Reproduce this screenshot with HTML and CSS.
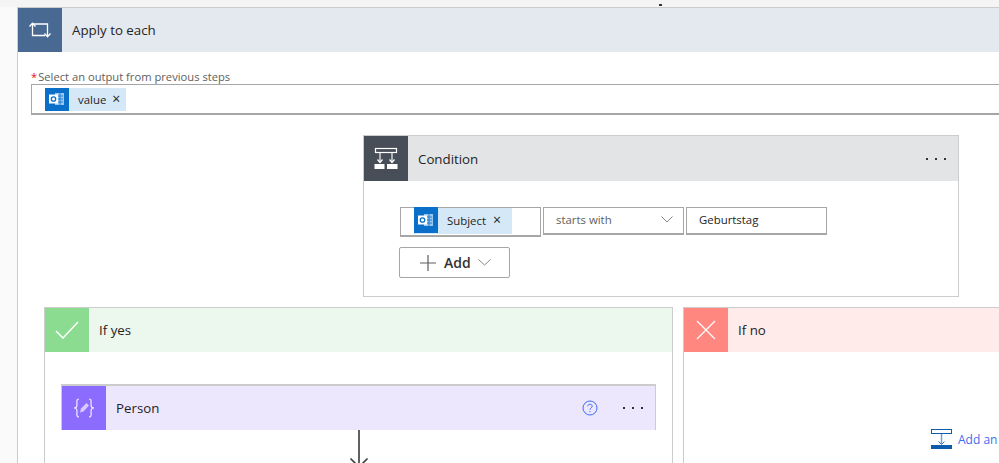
FILE: index.html
```html
<!DOCTYPE html>
<html lang="en">

<head>
    <meta charset="UTF-8">
    <meta name="viewport" content="width=device-width, initial-scale=1.0">
    <title>Apply to each</title>
    <link rel="stylesheet" href="styles.css">
</head>

<body>
    <div class="page">
        <div class="top-tick"></div>
        <div class="card loop">
            <div class="card-head loop-head">
                <div class="head-icon loop-icon">
                    <svg width="24" height="20" viewBox="0 0 24 20" fill="none" stroke="#fff" stroke-width="1.3">
                        <path d="M4.5 3V15.5H17" />
                        <path d="M4.5 4H19.5V16" />
                        <path d="M1.5 6.5L4.5 3.2L7.5 6.5M16.5 13.5L19.5 16.8L22.5 13.5" />
                    </svg>
                </div>
                <span class="head-title">Apply to each</span>
            </div>
            <div class="loop-body">
                <label class="field-label"><span class="req">*</span>Select an output from previous steps</label>
                <div class="output-input">
                    <span class="token">
                        <span class="token-icon">
                            <svg width="18" height="16" viewBox="0 0 18 16">
                                <path d="M7 2H16V14H7Z" fill="#9cc8ee" />
                                <path d="M9 5H15M9 8H15M9 11H15M12 2V14" stroke="#0a6fc9" stroke-width="0.8" />
                                <rect x="1" y="3.5" width="9" height="9" fill="#fff" />
                                <circle cx="5.5" cy="8" r="2.2" fill="none" stroke="#0a6fc9" stroke-width="1.3" />
                            </svg>
                        </span>
                        <span class="token-text">value</span>
                        <span class="token-x">×</span>
                    </span>
                </div>

                <div class="card condition">
                    <div class="card-head cond-head">
                        <div class="head-icon cond-icon">
                            <svg width="24" height="24" viewBox="0 0 24 24" fill="none" stroke="#fff" stroke-width="1.2">
                                <rect x="1.5" y="1.5" width="21" height="4" />
                                <path d="M6 6V15M18 6V15" stroke="#c9ccd0" stroke-width="1.6" />
                                <path d="M3.5 12.5L6 15.5L8.5 12.5M15.5 12.5L18 15.5L20.5 12.5" />
                                <path d="M0.5 17H10.5V22H0.5ZM13 17H23.5V22H13Z" fill="#fff" stroke="none" />
                            </svg>
                        </div>
                        <span class="head-title">Condition</span>
                        <span class="dots">
                            <i></i><i></i><i></i>
                        </span>
                    </div>
                    <div class="cond-body">
                        <div class="cond-row">
                            <div class="cond-field token-field">
                                <span class="token token-tall">
                                    <span class="token-icon">
                                        <svg width="18" height="16" viewBox="0 0 18 16">
                                            <path d="M7 2H16V14H7Z" fill="#9cc8ee" />
                                            <path d="M9 5H15M9 8H15M9 11H15M12 2V14" stroke="#0a6fc9" stroke-width="0.8" />
                                            <rect x="1" y="3.5" width="9" height="9" fill="#fff" />
                                            <circle cx="5.5" cy="8" r="2.2" fill="none" stroke="#0a6fc9" stroke-width="1.3" />
                                        </svg>
                                    </span>
                                    <span class="token-text">Subject</span>
                                    <span class="token-x">×</span>
                                </span>
                            </div>
                            <div class="cond-field cond-select">
                                <span>starts with</span>
                                <svg width="12" height="7" viewBox="0 0 12 7" fill="none" stroke="#8a8886" stroke-width="1">
                                    <path d="M0.5 0.5L6 6L11.5 0.5" />
                                </svg>
                            </div>
                            <div class="cond-field cond-value">Geburtstag</div>
                        </div>
                        <div class="add-btn">
                            <svg width="16" height="16" viewBox="0 0 16 16" fill="none" stroke="#605e5c" stroke-width="1.2">
                                <path d="M8 0V16M0 8H16" />
                            </svg>
                            <span>Add</span>
                            <svg class="add-chevron" width="13" height="7" viewBox="0 0 13 7" fill="none" stroke="#8a8886" stroke-width="1">
                                <path d="M0.5 0.5L6.5 6L12.5 0.5" />
                            </svg>
                        </div>
                    </div>
                </div>

                <div class="branches">
                    <div class="card branch">
                        <div class="card-head yes-head">
                            <div class="head-icon yes-icon">
                                <svg width="24" height="18" viewBox="0 0 24 18" fill="none" stroke="#fff" stroke-width="1.5">
                                    <path d="M1 10L8 17L23 1" />
                                </svg>
                            </div>
                            <span class="head-title">If yes</span>
                        </div>
                        <div class="yes-body">
                            <div class="card person">
                                <div class="card-head person-head">
                                    <div class="head-icon person-icon">
                                        <svg width="24" height="20" viewBox="0 0 24 20" fill="none" stroke="#f0ecff" stroke-width="1.2">
                                            <path d="M7 1C4 1 5 4 5 7C5 9 3.5 10 2 10C3.5 10 5 11 5 13C5 16 4 19 7 19" />
                                            <path d="M17 1C20 1 19 4 19 7C19 9 20.5 10 22 10C20.5 10 19 11 19 13C19 16 20 19 17 19" />
                                            <path d="M8 14.5L9 10.5L14.5 5L17 7.5L11.5 13.5Z" fill="#d6caff" stroke="none" />
                                        </svg>
                                    </div>
                                    <span class="head-title">Person</span>
                                    <svg class="help" width="16" height="16" viewBox="0 0 16 16" fill="none" stroke="#3f6cf0" stroke-width="1">
                                        <circle cx="8" cy="8" r="7" />
                                        <path d="M5.8 6.2C5.8 3.6 10.2 3.6 10.2 6.2C10.2 7.8 8 7.8 8 9.8" />
                                        <path d="M8 11V12.2" />
                                    </svg>
                                    <span class="dots">
                                        <i></i><i></i><i></i>
                                    </span>
                                </div>
                            </div>
                            <svg class="flow-arrow" width="20" height="33" viewBox="0 0 20 33" fill="none" stroke="#3a3a3a" stroke-width="1.6">
                                <path d="M10 0V33M1.5 28.5L10 37L18.5 28.5" />
                            </svg>
                        </div>
                    </div>

                    <div class="card branch">
                        <div class="card-head no-head">
                            <div class="head-icon no-icon">
                                <svg width="20" height="20" viewBox="0 0 20 20" fill="none" stroke="#fff" stroke-width="1.2">
                                    <path d="M1 1L19 19M19 1L1 19" />
                                </svg>
                            </div>
                            <span class="head-title">If no</span>
                        </div>
                        <div class="no-body">
                            <div class="add-action">
                                <svg width="21" height="20" viewBox="0 0 21 20" fill="none">
                                    <rect x="0.5" y="0.5" width="20" height="4" stroke="#0f5cad" />
                                    <path d="M10.5 5V15" stroke="#6e9fd6" stroke-width="1.5" />
                                    <path d="M7.5 12.5L10.5 15.5L13.5 12.5" stroke="#3c78bd" />
                                    <rect y="16" width="21" height="4" fill="#0f5cad" />
                                </svg>
                                <span>Add an</span>
                            </div>
                        </div>
                    </div>
                </div>
            </div>
        </div>
    </div>
</body>

</html>
```

FILE: styles.css
```css
body {
    font-family: "Open Sans", "Noto Sans", Arial, sans-serif;
    margin: 0;
    padding: 0;
    background-color: #fafafa;
    color: #252423;
}

.page {
    position: relative;
    height: 463px;
    overflow: hidden;
    padding: 7px 0 0 17px;
    box-sizing: border-box;
    background: linear-gradient(#f4f4f4 7px, #fafafa 7px);
}

.top-tick {
    position: absolute;
    top: 4px;
    left: 659px;
    width: 3px;
    height: 2px;
    background-color: #333;
}

.card {
    border: 1px solid #cccccc;
    background: white;
    box-sizing: border-box;
}

.loop {
    width: 1400px;
    height: 600px;
}

.card-head {
    display: flex;
    align-items: center;
    height: 44px;
}

.head-icon {
    width: 44px;
    height: 100%;
    flex-shrink: 0;
    display: flex;
    align-items: center;
    justify-content: center;
}

.head-title {
    margin-left: 10px;
    font-size: 13.3px;
    line-height: 20px;
}

.loop-head { background-color: #e4e8ef; }
.loop-icon { background-color: #486991; }

.loop-body {
    padding: 18px 0 0 13px;
}

.field-label {
    display: block;
    font-size: 11.2px;
    line-height: 14px;
    color: #605e5c;
}

.req {
    color: #e81123;
    margin-right: 1px;
}

.output-input {
    display: flex;
    align-items: center;
    height: 31px;
    padding-left: 13px;
    border: 1px solid #a6a6a6;
    border-bottom-width: 2px;
    box-sizing: border-box;
}

.token {
    display: flex;
    align-items: center;
    height: 23px;
    background-color: #d5e8f8;
    font-size: 11.4px;
}

.token-icon {
    width: 24px;
    height: 100%;
    background-color: #0a6fc9;
    display: flex;
    align-items: center;
    justify-content: center;
}

.token-text {
    margin-left: 9px;
}

.token-x {
    margin: 0 6px 0 6px;
    font-size: 14px;
    line-height: 14px;
}

.condition {
    width: 596px;
    height: 162px;
    margin: 20px 0 0 332px;
}

.cond-head {
    height: 45px;
    background-color: #e3e4e6;
}

.cond-icon { background-color: #474e58; }

.dots {
    display: flex;
    gap: 7px;
    margin-left: auto;
    margin-right: 12px;
}

.dots i {
    width: 2px;
    height: 2px;
    background-color: #333;
}

.cond-body {
    padding: 26px 0 0 35px;
}

.cond-row {
    display: flex;
    gap: 2px;
    align-items: flex-start;
    margin-left: 1px;
}

.cond-field {
    width: 141px;
    height: 28px;
    padding-bottom: 2px;
    border: 1px solid #a6a6a6;
    border-bottom-width: 2px;
    box-sizing: border-box;
    font-size: 11.4px;
    display: flex;
    align-items: center;
}

.token-field {
    height: 30px;
    padding-left: 13px;
    align-items: flex-start;
}

.token-tall {
    width: 98px;
    height: 26px;
    padding-bottom: 2px;
    box-sizing: border-box;
}

.token-tall .token-icon {
    height: 26px;
}

.token-tall .token-x {
    margin-left: 7px;
}

.cond-select {
    justify-content: space-between;
    padding-left: 12px;
    padding-right: 10px;
    color: #605e5c;
}

.cond-value {
    padding-left: 12px;
}

.add-btn {
    display: flex;
    align-items: center;
    gap: 8px;
    width: 111px;
    height: 31px;
    margin-top: 10px;
    padding-left: 20px;
    border: 1px solid #a6a6a6;
    border-radius: 2px;
    box-sizing: border-box;
    font-size: 14px;
    font-weight: 600;
    color: #323130;
}

.add-chevron {
    margin-left: -1px;
}

.branches {
    display: flex;
    gap: 10px;
    margin: 10px 0 0 13px;
}

.branch {
    flex-shrink: 0;
    width: 629px;
    height: 300px;
}

.yes-head { background-color: #ecf7ee; }
.yes-icon { background-color: #8bdb90; }
.no-head { background-color: #ffecea; }
.no-icon { background-color: #ff8780; }

.yes-body {
    display: flex;
    flex-direction: column;
    align-items: center;
    padding-top: 32px;
}

.person {
    width: 595px;
    height: 46px;
    border-top-width: 2px;
}

.person-head {
    background-color: #ede7fe;
}

.person-head .head-title {
    padding-bottom: 1px;
}

.person-icon {
    background-color: #8c6cff;
}

.help {
    margin-left: auto;
}

.person .dots {
    margin-left: 25px;
}

.flow-arrow {
    display: block;
}

.no-body {
    padding: 77px 0 0 247px;
}

.add-action {
    display: flex;
    align-items: center;
    gap: 6px;
    width: 200px;
    font-size: 12px;
    color: #3f6cf0;
    white-space: nowrap;
}
```
